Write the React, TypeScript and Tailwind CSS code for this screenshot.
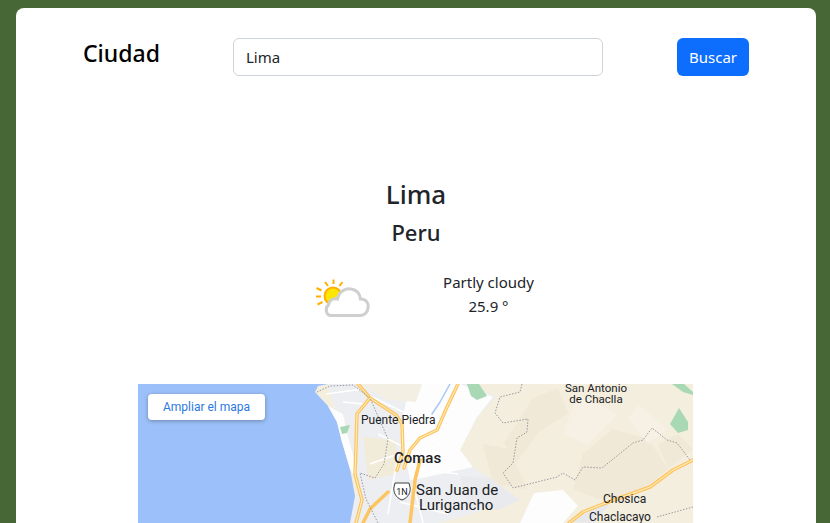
import React from 'react'

function WeatherIcon() {
    return (
        <svg viewBox="311 270 64 48" className="w-[64px] h-[48px]" fill="none">
            <circle cx="332" cy="296" r="8.5" fill="#ffe600" stroke="#ffb000" strokeWidth="2" />
            <g stroke="#ffb000" strokeWidth="2">
                <path d="M332.500 279.500v4.500" />
                <path d="M324 282l3 4" />
                <path d="M341.500 282l-3 4" />
                <path d="M315.500 288l5 2.500" />
                <path d="M315 296.500h5" />
                <path d="M316.500 304.500l5-2.500" />
            </g>
            <path
                d="M330 315.500C325 315.500 323.500 308 327.500 305C328 300 332 298 336.500 299C338 291 345 288 350 289C356 290 359 294 359.500 299C365 299 368 303 367 308C366.500 313 363 315.500 359 315.500Z"
                fill="#fff"
                stroke="#cfcfcf"
                strokeWidth="3"
            />
        </svg>
    )
}

function MapPicture() {
    const label = 'fill-[#202124] [font-family:Roboto,sans-serif]'
    return (
        <svg viewBox="0 0 555 139" className="block w-full h-[139px]">
            <rect width="555" height="139" fill="#f4eedf" />
            {/* hills */}
            <g fill="#f0e9d7">
                <path d="M395 14l25-10 10 25-30 20-22 30-12-20z" />
                <path d="M445 70l30-25 35 10 20 30-30 25-40 5-25-10z" />
                <path d="M345 60l25 5 20 40-35-5z" />
                <path d="M520 60l20-10 15 15-25 20z" />
            </g>
            <g fill="#f6f1e4">
                <path d="M440 10l40 20-30 30-25-10z" />
                <path d="M500 20l30 25-20 15-20-25z" />
            </g>
            {/* urban */}
            <path d="M190 0H330L358 13L339 33L322 66L335 83L372 110L340 128L300 139H210L222 100L205 55Z" fill="#eceef1" />
            <path d="M272 0H322L355 13L339 33L322 66L335 83L289 93L272 96L262 45Z" fill="#fdfdfe" />
            <path d="M222 0H284L278 18L250 16Z" fill="#f3efe3" />
            <path d="M225 53L258 56L258 90L230 96Z" fill="#f1ebda" />
            <path d="M396 109L425 106L440 122L425 139H382Z" fill="#fdfdfe" />
            <path d="M322 92L352 94L382 116L360 126L330 122Z" fill="#e9eaee" />
            <path d="M432 138L462 122L472 120L455 139Z" fill="#e6e8ec" />
            {/* water */}
            <path d="M0 0H190L180 2L177 8L190 22L199 38L204 58L212 85L217 112L212 139H0Z" fill="#9cc0f9" />
            <path d="M190 22L199 38L204 58L212 85L216 92L216 75L208 45L205 30Z" fill="#fdfdfe" />
            {/* parks */}
            <g fill="#a9d9b4">
                <path d="M202 43l10-2-3 8-5 1z" />
                <path d="M329 0h12l8 12-10 4-6-4z" />
                <path d="M541 24l9 14v8l-10 3-8-9z" />
                <path d="M534 0h12l9 8v3l-10-3z" />
            </g>
            {/* streets */}
            <g fill="none" stroke="#fff" strokeWidth="1.500">
                <path d="M228 10L290 40L320 8M262 36L300 60L335 30M240 50L290 75L270 110M280 85L320 90M232 80L260 70L250 130" />
                <path d="M275 100L285 139M262 118L310 130M225 20L205 18M188 10L225 5" />
            </g>
            {/* highways */}
            <g fill="none" strokeLinecap="round" strokeLinejoin="round">
                <g stroke="#fdc561" strokeWidth="3.500">
                    <path d="M220 0L232 14L258 31L264 40L265 68L259 86" />
                    <path d="M232 14L219 30L218 62L217 90L224 116L218 139" />
                    <path d="M320 0L309 23L299 46L282 54L272 66L266 84" />
                    <path d="M282 76L277 96L272 139" />
                    <path d="M431 139L445 128L465 120L512 103L535 86L555 76" />
                    <path d="M250 108L232 125L225 139" />
                </g>
                <g stroke="#fff2c9" strokeWidth="1">
                    <path d="M220 0L232 14L258 31L264 40L265 68L259 86" />
                    <path d="M232 14L219 30L218 62L217 90L224 116L218 139" />
                    <path d="M320 0L309 23L299 46L282 54L272 66L266 84" />
                    <path d="M431 139L445 128L465 120L512 103L535 86L555 76" />
                </g>
                <path d="M312 0L302 18L294 30" stroke="#a8c7f5" strokeWidth="1.500" />
            </g>
            {/* district borders */}
            <g fill="none" stroke="#8a8e94" strokeWidth="0.900" strokeDasharray="1.500 1.500">
                <path d="M179 8L192 2L215 1L232 14L250 55L246 80L237 94L222 89L228 115L240 139" />
                <path d="M384 0L382 8L362 13L357 29L365 39L390 35L389 48L379 54L375 79L365 89L375 104L419 93L425 89L437 96L445 83L464 84L495 59L505 56L514 44L529 56L539 59L552 76" />
                <path d="M519 133L555 123" />
            </g>
            {/* route shield */}
            <path d="M257 99h14l1 4c1 5-2 11-8 13c-6-2-9-8-8-13z" fill="#fff" stroke="#3c4043" strokeWidth="1" />
            <text x="264" y="111" textAnchor="middle" className={`${label} text-[9px]`}>1N</text>
            {/* place names */}
            <g className={label}>
                <text x="223" y="40" className="text-[12px]">Puente Piedra</text>
                <text x="256" y="79" className="text-[15px] font-medium">Comas</text>
                <text x="278" y="111" className="text-[15px]">San Juan de</text>
                <text x="281" y="126" className="text-[15px]">Lurigancho</text>
                <text x="458" y="8" textAnchor="middle" className="text-[11.500px]">San Antonio</text>
                <text x="458" y="19" textAnchor="middle" className="text-[11.500px]">de Chaclla</text>
                <text x="465" y="119" className="text-[12px]">Chosica</text>
                <text x="451" y="137" className="text-[12px]">Chaclacayo</text>
            </g>
        </svg>
    )
}

export default function App() {
    return (
        <div className="h-[523px] overflow-hidden bg-[#486736] pt-2 px-4 font-['Noto_Sans',sans-serif] text-[#212529]">
            <div className="w-[800px] h-[600px] rounded-lg bg-white">
                <div className="flex items-start pt-[30px] pl-[67px]">
                    <h3 className="w-[150px] text-[23px] leading-[30px] font-medium text-black">Ciudad</h3>
                    <input
                        readOnly
                        value="Lima"
                        className="w-[370px] h-[38px] rounded-md border border-[#ced4da] px-3 text-[15px] text-[#212529] outline-none"
                    />
                    <button className="ml-[74px] w-[72px] h-[38px] rounded-md bg-[#0d6efd] text-[15px] text-white">
                        Buscar
                    </button>
                </div>
                <div className="mt-[100px] text-center">
                    <h2 className="text-[26px] leading-[36px] font-medium">Lima</h2>
                    <h3 className="mt-[2px] text-[22px] leading-[36px] font-medium">Peru</h3>
                </div>
                <div className="mt-[20px] flex justify-center">
                    <div className="w-[145px] flex justify-center">
                        <WeatherIcon />
                    </div>
                    <div className="w-[145px] text-center text-[15px] leading-6">
                        <p>Partly cloudy</p>
                        <p>25.9 °</p>
                    </div>
                </div>
                <div className="relative mt-[66px] ml-[122px] w-[555px]">
                    <MapPicture />
                    <div className="absolute left-[10px] top-[10px] w-[117px] h-[26px] rounded-sm bg-white shadow-[0_1px_4px_rgba(0,0,0,0.3)] flex items-center justify-center font-['Roboto',sans-serif] text-[12px] text-[#2b78e4]">
                        Ampliar el mapa
                    </div>
                </div>
            </div>
        </div>
    )
}
